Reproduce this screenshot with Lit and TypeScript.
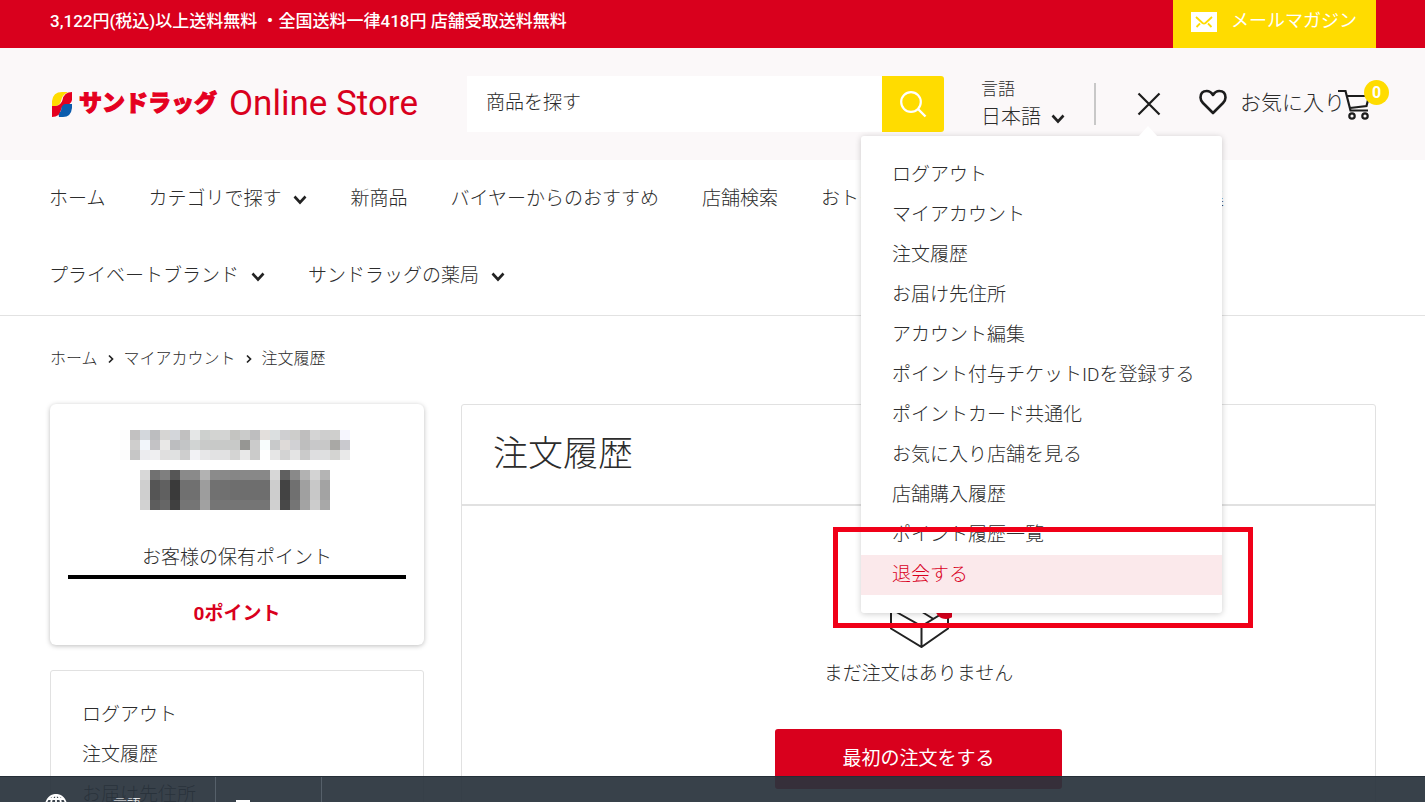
import { LitElement, html, css, svg } from "lit";
import { customElement } from "lit/decorators.js";

const NAV = [
  { label: "ホーム", more: false },
  { label: "カテゴリで探す", more: true },
  { label: "新商品", more: false },
  { label: "バイヤーからのおすすめ", more: false },
  { label: "店舗検索", more: false },
  { label: "おトクなキャンペーン", more: false },
  { label: "ライフスタイル特集", more: false },
  { label: "プライベートブランド", more: true },
  { label: "サンドラッグの薬局", more: true },
];

const ACCOUNT_MENU = [
  "ログアウト",
  "マイアカウント",
  "注文履歴",
  "お届け先住所",
  "アカウント編集",
  "ポイント付与チケットIDを登録する",
  "ポイントカード共通化",
  "お気に入り店舗を見る",
  "店舗購入履歴",
  "ポイント履歴一覧",
  "退会する",
];

const SIDE_MENU = ["ログアウト", "注文履歴", "お届け先住所"];

// Grey levels of the masked member name and number, one value per 10px block.
const MASK_NAME = [
  "fdfdfd c2c1c1 d3d7dc bcbdbf d6d5d3 d3d6da c1c0c0 e5e7e7 cdd0ce d3d4d2 d3d4d3 c4c4c1 cacbca bebebf e3dfdc dbdfe0 cfcfd1 cdcdcb bfbebe d4d4d4 cecece cfcfcd f6f6fe",
  "fefefe cfcecd f2f6fb c3c2c5 e9e8e7 bcbdbf c3c5c6 d1d4d3 c9cac9 c8c9c8 c8c9c8 c8c9c8 969693 cbcbcb f8fdfd c8c9ca dedad8 d1d1d4 bebebe c8c8c9 c8c8c8 a9a8a5 c9c9ce",
  "fcfcfc c6c6c6 ececef efeff1 e0dfdf e0e1e1 cecece f2f2f5 e7e7e8 e2e2e3 e1e1e2 d4d4d3 e8e8e8 cbcbca ffffff e6e6e6 d3d3d3 e4e4e4 cacaca dedee0 dedfe0 d4d4d2 e9e9e9",
];
const MASK_NUMBER = [
  "d8d8d8 717171 7f7f7f 565656 8a8a8a 8a8a8a b2b2b2 8b8b8b 898989 868686 888888 888888 888888 d7d7d7 606060 898989 b2b2b2 d3d3d3 b4b4b4",
  "cfcfcf 555555 606060 3a3a3a 707070 707070 9d9d9d 717171 707070 6e6e6e 6e6e6e 6e6e6e 6e6e6e cdcdcd 434343 707070 a0a0a0 c8c8c8 a3a3a3",
  "cfcfcf 555555 606060 3a3a3a 707070 707070 9d9d9d 717171 707070 6e6e6e 6e6e6e 6e6e6e 6e6e6e cdcdcd 434343 707070 a0a0a0 c8c8c8 a3a3a3",
  "d2d2d2 5d5d5d 666666 404040 757575 757575 a1a1a1 757575 757575 757575 757575 757575 757575 d0d0d0 484848 757575 a3a3a3 cccccc a8a8a8",
];

const blocks = (rows: string[], x0: number, y0: number) =>
  rows.map((row, r) =>
    row.split(" ").map(
      (c, i) => svg`<rect x=${x0 + i * 10} y=${y0 + r * 10} width="10" height="10" fill=${"#" + c}></rect>`
    )
  );

const chevron = html`<svg class="chevron" width="14" height="10" viewBox="0 0 14 10" aria-hidden="true">
  <path d="M1.500 1.500l5.500 6 5.500-6" fill="none" stroke="#222" stroke-width="2.600"/></svg>`;

const crumbArrow = html`<svg width="6" height="10" viewBox="0 0 6 10" aria-hidden="true">
  <path d="M1 1.500l3.500 3.500L1 8.500" fill="none" stroke="#222" stroke-width="1.700"/></svg>`;

@customElement("app-root")
export class AppRoot extends LitElement {
  static styles = css`
    :host {
      display: block;
      position: relative;
      height: 100vh;
      overflow: hidden;
      background: #fff;
      color: #2c2c2c;
      font-family: Roboto, "Noto Sans CJK JP", sans-serif;
      font-size: 19px;
      font-weight: 300;
      line-height: 40px;
    }
    * { box-sizing: border-box; }
    a { color: inherit; text-decoration: none; }
    ul, ol { list-style: none; margin: 0; padding: 0; }
    button, input, select { font: inherit; color: inherit; border: 0; margin: 0; padding: 0; background: none; border-radius: 0; }
    svg { display: block; flex: none; }

    .topbar {
      display: flex;
      justify-content: space-between;
      height: 48px;
      padding: 0 49px 0 50px;
      background: #d9001d;
      color: #fff;
      font-size: 18px;
      line-height: 42px;
    }
    .notice { margin: 0; font-size: 17px; font-weight: 500; }
    .mail {
      display: flex;
      gap: 14px;
      padding: 0 19px 0 18px;
      background: #ffdc00;
      font-weight: 400;
    }
    .mail svg { margin-top: 12px; }

    .header {
      display: flex;
      align-items: center;
      height: 112px;
      padding: 0 49px 0 50px;
      background: #fbf8f9;
    }
    .logo {
      display: flex;
      align-items: center;
      width: 375px;
      color: #e5001f;
      white-space: nowrap;
    }
    .logo-name { margin-left: 6px; font-size: 23px; font-weight: 900; -webkit-text-stroke: 1px #e5001f; }
    .logo-sub { margin-left: 12px; font-family: Roboto, sans-serif; font-size: 35px; font-weight: 400; color: #d9001d; }
    .search { display: flex; flex: 1; height: 56px; margin-left: 42px; }
    .search input { flex: 1; min-width: 0; padding: 0 19px 2px; background: #fff; outline: 0; }
    .search input::placeholder { color: #2c2c2c; opacity: 1; }
    .search button {
      display: grid;
      place-items: center;
      width: 62px;
      background: #ffdc00;
      border-radius: 0 3px 3px 0;
    }
    .language { margin: -3px 0 0 37px; line-height: 28px; }
    .language label { display: block; font-size: 17px; }
    .select { display: flex; align-items: center; gap: 10px; }
    .select select { appearance: none; font-size: 20px; height: 28px; line-height: 28px; }
    .select .chevron { margin-top: 4px; }
    .divider { width: 2px; height: 42px; margin-left: 29px; background: #c8c8c8; }
    .account { position: relative; margin-left: 41px; }
    .account > button { display: block; }
    .fav { display: flex; align-items: center; gap: 13px; margin-left: 38px; font-size: 21px; }
    .fav span { margin-top: -2px; }
    .fav svg { margin-top: -4px; }
    .cart { position: relative; margin-left: -7px; margin-right: 4px; }
    .badge {
      position: absolute;
      top: -9px;
      left: 26px;
      width: 25px;
      height: 25px;
      border-radius: 50%;
      background: #ffdc00;
      color: #fff;
      font-size: 16px;
      font-weight: 700;
      line-height: 25px;
      text-align: center;
    }

    .menu {
      position: absolute;
      z-index: 2;
      top: 44px;
      right: -61px;
      width: 361px;
      padding: 19px 0 18px;
      background: #fff;
      border-radius: 3px;
      box-shadow: 0 1px 6px rgba(0, 0, 0, 0.2);
    }
    .menu-tip { position: absolute; top: -10px; right: 64px; }
    .menu a { display: block; padding: 0 31px; white-space: nowrap; }
    .menu li:last-child a { background: #fbe9eb; color: #d9001d; }
    .marker {
      position: absolute;
      left: -28px;
      right: -31px;
      bottom: -15px;
      height: 101px;
      border: 5px solid #f00018;
      pointer-events: none;
    }

    .nav {
      display: flex;
      flex-wrap: wrap;
      column-gap: 43px;
      padding: 0 49px 1px;
      border-bottom: 1px solid #e2e2e2;
      line-height: 77px;
    }
    .nav a { display: flex; align-items: center; gap: 12px; }
    .nav .chevron { margin-top: 3px; }

    .crumbs {
      display: flex;
      align-items: center;
      gap: 10px;
      padding: 31px 50px 33px;
      font-size: 16px;
      line-height: 24px;
    }
    .crumbs li { display: flex; align-items: center; gap: 10px; }

    .columns {
      display: grid;
      grid-template-columns: 374px 1fr;
      gap: 37px;
      padding: 0 49px 0 50px;
    }
    .side { display: flex; flex-direction: column; gap: 25px; }
    .points {
      padding: 26px 18px 12px;
      border-radius: 6px;
      box-shadow: 0 1px 5px rgba(0, 0, 0, 0.26);
      text-align: center;
      line-height: 38px;
    }
    .points svg { margin: 0 auto 31px; }
    .points h2 { margin: 0 0 16px; border-bottom: 4px solid #000; font-size: 19px; font-weight: 300; line-height: 34px; }
    .points p { margin: 0; color: #d9001d; font-weight: 700; }
    .box { border: 1px solid #e1e1e1; border-radius: 3px; }
    .side-menu { padding: 24px 31px; }
    .box h1 {
      margin: 0;
      padding: 0 31px;
      border-bottom: 2px solid #e1e1e1;
      font-size: 35px;
      font-weight: 300;
      line-height: 99px;
    }
    .empty { display: flex; flex-direction: column; align-items: center; padding: 70px 32px 40px; }
    .empty p { margin: 6px 0 35px; }
    .primary {
      width: 287px;
      height: 60px;
      border-radius: 3px;
      background: #d9001d;
      color: #fff;
      font-weight: 400;
    }

    .dock {
      position: absolute;
      z-index: 3;
      left: 0;
      right: 0;
      bottom: 0;
      display: flex;
      height: 26px;
      overflow: hidden;
      padding-left: 45px;
      background: rgba(41, 51, 60, 0.93);
      border-top: 1px solid #252e37;
      color: #fff;
      font-size: 14px;
      line-height: 20px;
    }
    .dock div { display: flex; align-items: flex-start; padding-top: 17px; border-right: 1px solid #56606a; }
    .dock .lang { width: 171px; gap: 46px; }
    .dock .tabs { width: 106px; padding-left: 20px; }
  `;

  render() {
    return html`
      <div class="topbar">
        <p class="notice">3,122円(税込)以上送料無料 ・全国送料一律418円 店舗受取送料無料</p>
        <a class="mail" href="#">
          <svg width="26" height="20" viewBox="0 0 26 20" aria-hidden="true">
            <rect width="26" height="20" fill="#fff"/>
            <path d="M5 5l6.500 6q1.500 1.200 3 0L21 5M5.500 15l3.500-3.500M20.500 15L17 11.500" fill="none" stroke="#ffdc00" stroke-width="1.800"/>
          </svg>
          <span>メールマガジン</span>
        </a>
      </div>

      <header class="header">
        <a class="logo" href="#">
          <svg width="23" height="27" viewBox="0 0 23 27" aria-hidden="true">
            <path d="M2 15V10Q3 1 12 1h6q-6 3-7 9-1 4-5 5z" fill="#ffdc00"/>
            <path d="M22 1v8q-1 5-7 5-3 .5-4 5-1 7-9 7V15h4q5-1 6.500-6Q14 1 22 1z" fill="#e5001f"/>
            <path d="M22 13v4q-1 9-9 9H9q-1-3 2-6 0-6 4-7z" fill="#0b5cad"/>
          </svg>
          <span class="logo-name">サンドラッグ</span>
          <span class="logo-sub">Online Store</span>
        </a>
        <form class="search" @submit=${(e: Event) => e.preventDefault()}>
          <input type="search" aria-label="商品を探す" placeholder="商品を探す" />
          <button type="submit" aria-label="検索">
            <svg width="28" height="28" viewBox="0 0 28 28" aria-hidden="true">
              <circle cx="12" cy="12" r="9.800" fill="none" stroke="#fff" stroke-width="2.200"/>
              <path d="M19 19l7.500 7.500" stroke="#fff" stroke-width="2.400"/>
            </svg>
          </button>
        </form>
        <div class="language">
          <label for="language">言語</label>
          <div class="select">
            <select id="language"><option>日本語</option></select>
            ${chevron}
          </div>
        </div>
        <div class="divider"></div>
        <div class="account">
          <button type="button" aria-label="閉じる" aria-expanded="true">
            <svg width="24" height="24" viewBox="0 0 24 24" aria-hidden="true">
              <path d="M1.500 1.500l21 21M22.500 1.500l-21 21" stroke="#1c1c1c" stroke-width="2.200"/>
            </svg>
          </button>
          <div class="menu">
            <svg class="menu-tip" width="20" height="11" viewBox="0 0 20 11" aria-hidden="true">
              <path d="M0 11L10 0l10 11z" fill="#fff"/>
            </svg>
            <ul>${ACCOUNT_MENU.map((m) => html`<li><a href="#">${m}</a></li>`)}</ul>
            <div class="marker"></div>
          </div>
        </div>
        <a class="fav" href="#">
          <svg width="28" height="26" viewBox="0 0 28 26" aria-hidden="true">
            <path d="M14 24L4 14Q1.500 11.300 1.500 8.500 1.500 2 7.800 2 11.500 2 14 6 16.500 2 20.200 2 26.500 2 26.500 8.500 26.500 11.300 24 14z" fill="none" stroke="#1c1c1c" stroke-width="2.600" stroke-linejoin="round"/>
          </svg>
          <span>お気に入り</span>
        </a>
        <a class="cart" href="#" aria-label="カート">
          <svg width="34" height="31" viewBox="0 0 34 31" aria-hidden="true">
            <path d="M0 2h7.500l5 19.500H30M9 7h22l-2.500 10L12 19" fill="none" stroke="#1c1c1c" stroke-width="2.200"/>
            <circle cx="14" cy="27" r="2.700" fill="none" stroke="#1c1c1c" stroke-width="2.200"/>
            <circle cx="27" cy="27" r="2.700" fill="none" stroke="#1c1c1c" stroke-width="2.200"/>
          </svg>
          <span class="badge">0</span>
        </a>
      </header>

      <nav class="nav">
        ${NAV.map((n) => html`<a href="#">${n.label}${n.more ? chevron : ""}</a>`)}
      </nav>

      <ol class="crumbs">
        <li><a href="#">ホーム</a>${crumbArrow}</li>
        <li><a href="#">マイアカウント</a>${crumbArrow}</li>
        <li>注文履歴</li>
      </ol>

      <div class="columns">
        <aside class="side">
          <section class="points">
            <svg width="234" height="80" viewBox="0 0 234 80" shape-rendering="crispEdges" aria-hidden="true">
              ${blocks(MASK_NAME, 0, 0)}${blocks(MASK_NUMBER, 20, 40)}
            </svg>
            <h2>お客様の保有ポイント</h2>
            <p>0ポイント</p>
          </section>
          <ul class="box side-menu">
            ${SIDE_MENU.map((m) => html`<li><a href="#">${m}</a></li>`)}
          </ul>
        </aside>
        <main class="box">
          <h1>注文履歴</h1>
          <div class="empty">
            <svg width="66" height="72" viewBox="0 0 66 72" aria-hidden="true">
              <g fill="none" stroke="#222" stroke-width="2">
                <path d="M5 33v19.500L35.500 71 62 52.500V33M35.500 50v21M5 33l30.500 17L62 34M5 33l29-15 28 16"/>
                <path d="M20 26l27.500 17"/>
              </g>
              <circle cx="60" cy="32" r="11" fill="#d9001d"/>
            </svg>
            <p>まだ注文はありません</p>
            <button class="primary" type="button">最初の注文をする</button>
          </div>
        </main>
      </div>

      <div class="dock">
        <div class="lang">
          <svg width="22" height="22" viewBox="0 0 22 22" aria-hidden="true">
            <g fill="none" stroke="#fff" stroke-width="1.800">
              <circle cx="11" cy="11" r="10"/><ellipse cx="11" cy="11" rx="5" ry="10"/><path d="M11 1v20M1 11h20M3 5h16"/>
            </g>
          </svg>
          <span>言語</span>
        </div>
        <div class="tabs">
          <svg width="14" height="14" viewBox="0 0 14 14" aria-hidden="true">
            <path d="M1 7h12v6H1zM4 10h6" fill="none" stroke="#fff" stroke-width="2"/>
          </svg>
        </div>
      </div>
    `;
  }
}
